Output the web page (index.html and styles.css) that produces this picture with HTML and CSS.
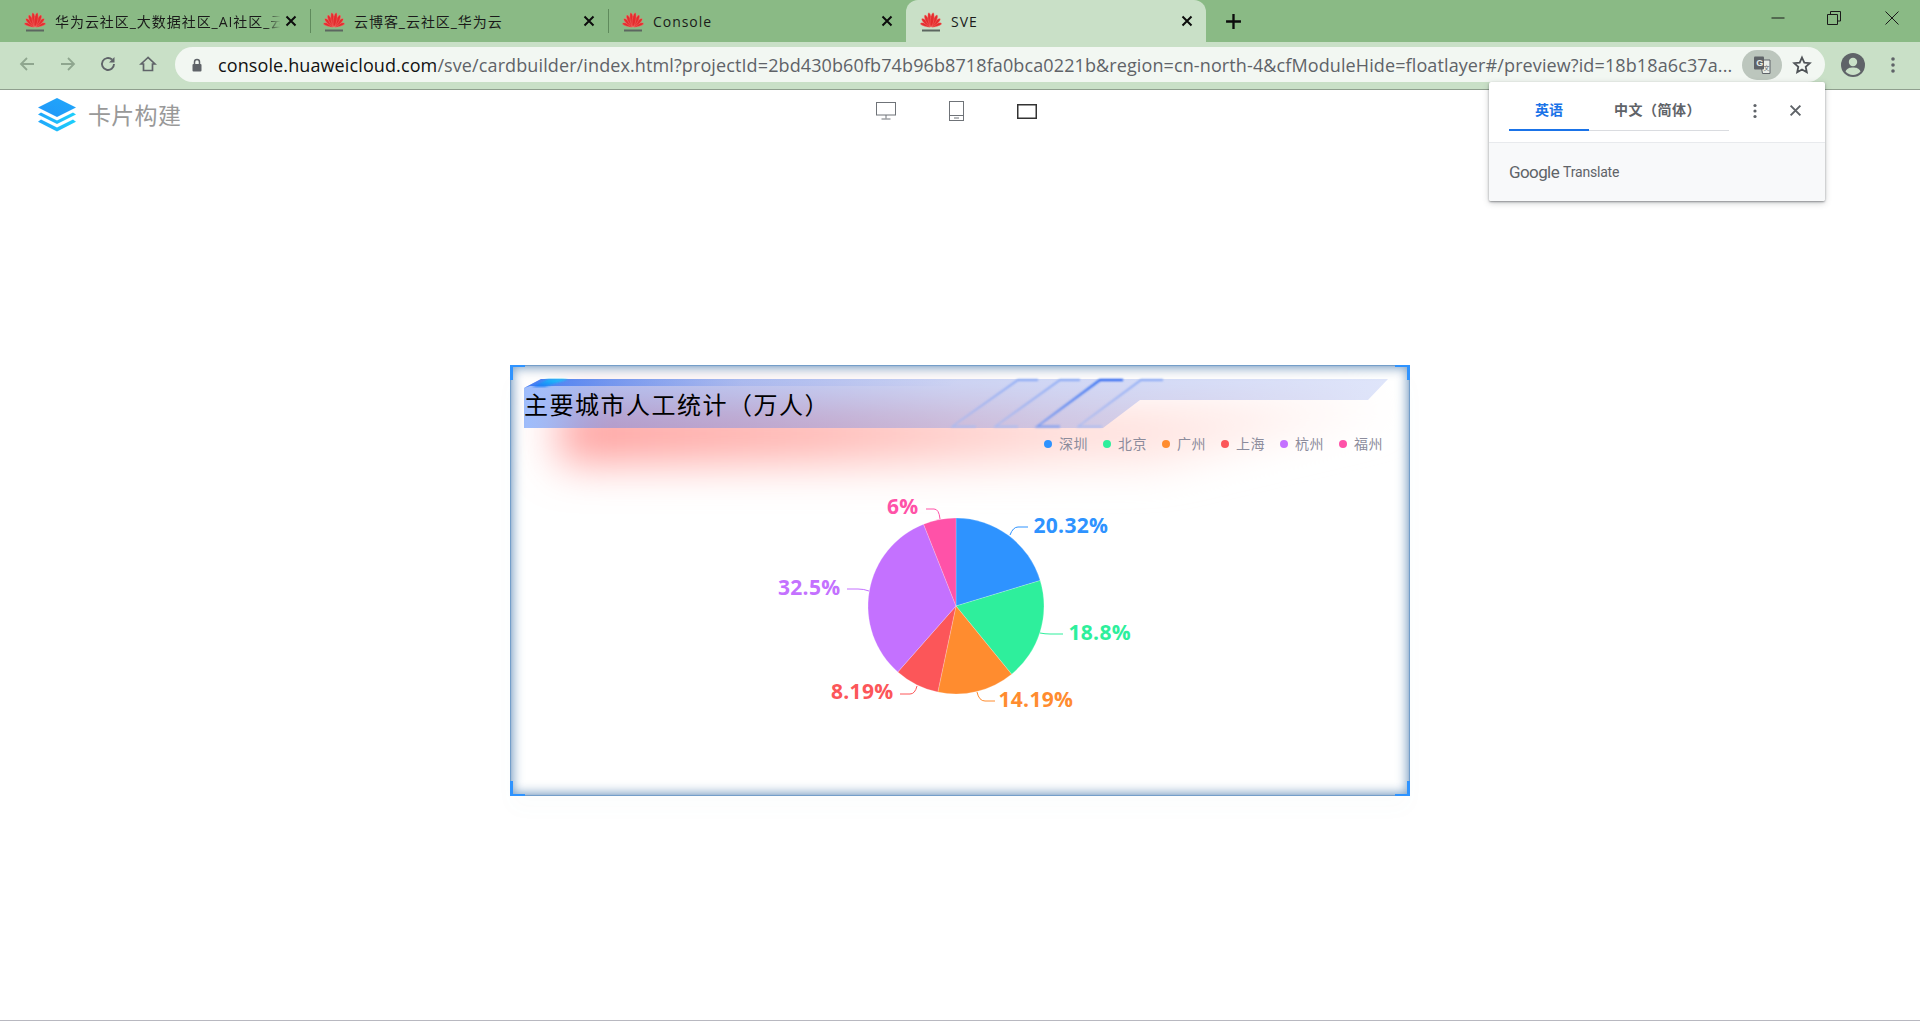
FILE: index.html
```html
<!DOCTYPE html>
<html lang="zh-CN">
<head>
<meta charset="utf-8">
<title>SVE</title>
<link rel="stylesheet" href="styles.css">
</head>
<body>
<svg class="defs" width="0" height="0" aria-hidden="true">
  <defs>
    <symbol id="huawei" viewBox="0 0 22 20">
      <g fill="#e42c2e" stroke="#f58a7e" stroke-width="0.350">
        <ellipse cx="11" cy="9" rx="1.500" ry="5.500" transform="rotate(-74 11 14.500)"/>
        <ellipse cx="11" cy="9" rx="1.500" ry="5.500" transform="rotate(74 11 14.500)"/>
        <ellipse cx="11" cy="8.500" rx="1.800" ry="6" transform="rotate(-50 11 14.500)"/>
        <ellipse cx="11" cy="8.500" rx="1.800" ry="6" transform="rotate(50 11 14.500)"/>
        <ellipse cx="11" cy="8" rx="1.900" ry="6.500" transform="rotate(-29 11 14.500)"/>
        <ellipse cx="11" cy="8" rx="1.900" ry="6.500" transform="rotate(29 11 14.500)"/>
        <ellipse cx="11" cy="7.500" rx="1.800" ry="7" transform="rotate(-9 11 14.500)"/>
        <ellipse cx="11" cy="7.500" rx="1.800" ry="7" transform="rotate(9 11 14.500)"/>
      </g>
      <rect x="2" y="17.500" width="18" height="2" fill="#5c6660"/>
    </symbol>
    <symbol id="tabx" viewBox="0 0 12 12">
      <path d="M1.500 1.500 10.500 10.500M10.500 1.500 1.500 10.500" fill="none" stroke="#0c0c0c" stroke-width="2"/>
    </symbol>
  </defs>
</svg>

<header class="browser">
  <div class="tabstrip">
    <div class="tab">
      <svg class="favicon"><use href="#huawei"/></svg>
      <span class="tab-title tab-title-fade">华为云社区_大数据社区_AI社区_云</span>
      <svg class="tab-close"><use href="#tabx"/></svg>
    </div>
    <div class="tab tab-second">
      <svg class="favicon"><use href="#huawei"/></svg>
      <span class="tab-title">云博客_云社区_华为云</span>
      <svg class="tab-close"><use href="#tabx"/></svg>
    </div>
    <div class="tab tab-last">
      <svg class="favicon"><use href="#huawei"/></svg>
      <span class="tab-title">Console</span>
      <svg class="tab-close"><use href="#tabx"/></svg>
    </div>
    <div class="tab tab-active">
      <svg class="favicon"><use href="#huawei"/></svg>
      <span class="tab-title">SVE</span>
      <svg class="tab-close"><use href="#tabx"/></svg>
    </div>
    <svg class="newtab" viewBox="0 0 16 16"><path d="M8 1V15M1 8H15" stroke="#0c0c0c" stroke-width="2.200"/></svg>
    <div class="winctl">
      <svg class="winbtn" viewBox="0 0 14 14"><path d="M0.500 7H13.500" stroke="#1a1a1a" fill="none"/></svg>
      <svg class="winbtn" viewBox="0 0 14 14"><path d="M3.500 3V0.500H13.500V10H11M0.500 3.500H10.500V13.500H0.500Z" stroke="#1a1a1a" fill="none"/></svg>
      <svg class="winbtn winbtn-close" viewBox="0 0 14 14"><path d="M0.500 0.500 13.500 13.500M13.500 0.500 0.500 13.500" stroke="#1a1a1a" fill="none"/></svg>
    </div>
  </div>
  <div class="toolbar">
    <svg class="navicon nav-back" viewBox="0 0 18 18"><path d="M16 9H3M9 3 3 9 9 15" fill="none" stroke="#8fa68f" stroke-width="1.800"/></svg>
    <svg class="navicon nav-fwd" viewBox="0 0 18 18"><path d="M2 9H15M9 3 15 9 9 15" fill="none" stroke="#8fa68f" stroke-width="1.800"/></svg>
    <svg class="navicon nav-reload" viewBox="0 0 18 18"><path d="M15 9A6 6 0 1 1 13 4.500" fill="none" stroke="#5f6368" stroke-width="1.900"/><path d="M15.500 2V7.500H10Z" fill="#5f6368"/></svg>
    <svg class="navicon nav-home" viewBox="0 0 18 18"><path d="M9 2.500 2 9H4.500V15.500H13.500V9H16Z" fill="none" stroke="#5f6368" stroke-width="1.700"/></svg>
    <div class="omnibox">
      <svg class="lock" viewBox="0 0 12 14"><path d="M3.500 6V4A2.500 2.500 0 0 1 8.500 4V6" fill="none" stroke="#5f6368" stroke-width="1.500"/><rect x="1.500" y="6" width="9" height="7.500" rx="1" fill="#5f6368"/></svg>
      <div class="url"><span class="url-host">console.huaweicloud.com</span>/sve/cardbuilder/index.html?projectId=2bd430b60fb74b96b8718fa0bca0221b&amp;region=cn-north-4&amp;cfModuleHide=floatlayer#/preview?id=18b18a6c37a...</div>
      <div class="translate-pill">
        <svg class="gt" viewBox="0 0 20 20"><path d="M8 5H18V18.500H10.500Z" fill="#e9eee9" stroke="#5f6368" stroke-width="1"/><rect x="2" y="1.500" width="10" height="13" rx="1" fill="#5f6368"/><text class="gt-g" x="4.200" y="11">G</text><text class="gt-x" x="11.500" y="15">文</text></svg>
      </div>
      <svg class="star" viewBox="0 0 20 20"><path d="M10 2.500 12.300 7.600 17.800 8.200 13.700 11.900 14.800 17.300 10 14.500 5.200 17.300 6.300 11.900 2.200 8.200 7.700 7.600Z" fill="none" stroke="#4f5357" stroke-width="1.800"/></svg>
    </div>
    <svg class="avatar" viewBox="0 0 24 24"><circle cx="12" cy="12" r="12" fill="#5f6368"/><circle cx="12" cy="9" r="4.200" fill="#c9e0c7"/><path d="M4.500 18.500C6 15 9 14.500 12 14.500S18 15 19.500 18.500A10 10 0 0 1 4.500 18.500Z" fill="#c9e0c7"/></svg>
    <svg class="menu" viewBox="0 0 4 18"><circle cx="2" cy="3" r="1.800"/><circle cx="2" cy="9" r="1.800"/><circle cx="2" cy="15" r="1.800"/></svg>
  </div>
</header>

<aside class="gt-popup">
  <div class="gt-top">
    <div class="gt-tabs">
      <span class="gt-tab gt-tab-on">英语</span>
      <span class="gt-tab">中文（简体）</span>
    </div>
    <svg class="gt-dots" viewBox="0 0 4 16"><circle cx="2" cy="2.500" r="1.600"/><circle cx="2" cy="8" r="1.600"/><circle cx="2" cy="13.500" r="1.600"/></svg>
    <svg class="gt-close" viewBox="0 0 12 12"><path d="M1.500 1.500 10.500 10.500M10.500 1.500 1.500 10.500" stroke="#5f6368" stroke-width="1.800" fill="none"/></svg>
  </div>
  <div class="gt-foot"><span class="gt-brand">Google</span> <span class="gt-name">Translate</span></div>
</aside>

<main class="page">
  <div class="topbar">
    <div class="brand">
      <svg class="brand-logo" viewBox="0 0 40 34">
        <defs>
          <linearGradient id="lg1" x1="0" y1="1" x2="1" y2="0"><stop offset="0" stop-color="#2196f8"/><stop offset="1" stop-color="#20a8fb"/></linearGradient>
          <linearGradient id="lg2" x1="0" y1="0" x2="1" y2="0"><stop offset="0" stop-color="#20a6fb"/><stop offset="1" stop-color="#1dd0fb"/></linearGradient>
        </defs>
        <path d="M20 0 39 9.500 20 19 1 9.500Z" fill="url(#lg1)"/>
        <path d="M4 14.500 20 22.500 36 14.500 39 16.500 20 26 1 16.500Z" fill="url(#lg2)"/>
        <path d="M4 21.500 20 29.500 36 21.500 39 23.800 20 33.500 1 23.800Z" fill="url(#lg2)"/>
      </svg>
      <span class="brand-name">卡片构建</span>
    </div>
    <div class="devices">
      <svg class="dev-desktop" viewBox="0 0 20 18"><rect x="0.500" y="0.500" width="19" height="12.500" fill="none" stroke="#6f7378"/><path d="M10 13V16.500M5.500 17H14.500" stroke="#6f7378" fill="none"/></svg>
      <svg class="dev-tablet" viewBox="0 0 15 20"><rect x="0.500" y="0.500" width="14" height="19" fill="none" stroke="#6f7378"/><path d="M0.500 14.500H14.500" stroke="#6f7378"/><path d="M5 17H10" stroke="#6f7378"/></svg>
      <svg class="dev-wide" viewBox="0 0 20 15"><rect x="0.750" y="0.750" width="18.500" height="13.500" fill="none" stroke="#333" stroke-width="1.500"/></svg>
    </div>
    <div class="topbar-end"></div>
  </div>

  <section class="card">
    <svg class="card-decor" viewBox="510 365 900 431" aria-hidden="true">
      <defs>
        <filter id="glowblur" x="-20%" y="-200%" width="140%" height="500%"><feGaussianBlur stdDeviation="22"/></filter>
        <filter id="softblur" x="-10%" y="-10%" width="120%" height="120%"><feGaussianBlur stdDeviation="0.800"/></filter>
        <linearGradient id="glowfill" x1="0" y1="0" x2="1" y2="0">
          <stop offset="0" stop-color="#ff9a98"/>
          <stop offset="0.300" stop-color="#ffb4b0"/>
          <stop offset="0.600" stop-color="#ffdcd8"/>
          <stop offset="1" stop-color="#fff4f2"/>
        </linearGradient>
        <linearGradient id="bandfill" x1="0" y1="0" x2="1" y2="0">
          <stop offset="0" stop-color="#7fa8fb" stop-opacity="0.750"/>
          <stop offset="0.100" stop-color="#6a8ae8" stop-opacity="0.500"/>
          <stop offset="0.500" stop-color="#6f8eea" stop-opacity="0.350"/>
          <stop offset="1" stop-color="#5f7fe8" stop-opacity="0.200"/>
        </linearGradient>
        <linearGradient id="bandtop" x1="0" y1="0" x2="1" y2="0">
          <stop offset="0" stop-color="#2f6cf0" stop-opacity="0.800"/>
          <stop offset="0.500" stop-color="#5f8af0" stop-opacity="0.200"/>
          <stop offset="1" stop-color="#5f8af0" stop-opacity="0"/>
        </linearGradient>
        <linearGradient id="tip" x1="0" y1="1" x2="1" y2="0">
          <stop offset="0" stop-color="#1f6cf5"/>
          <stop offset="1" stop-color="#19d6fb"/>
        </linearGradient>
        <linearGradient id="linesoft" x1="0" y1="0" x2="0" y2="1">
          <stop offset="0" stop-color="#6f97f6"/>
          <stop offset="1" stop-color="#a6bbf4"/>
        </linearGradient>
        <linearGradient id="linestrong" x1="0" y1="0" x2="0" y2="1">
          <stop offset="0" stop-color="#1257f2"/>
          <stop offset="1" stop-color="#7f9ff2"/>
        </linearGradient>
      </defs>
      <path d="M560 405H1400L1160 462H560Z" fill="url(#glowfill)" filter="url(#glowblur)"/>
      <path d="M524 388 541 379H1388L1368 400H1140L1103 428H524Z" fill="url(#bandfill)"/>
      <path d="M524 388 541 379H960L950 386H530Z" fill="url(#bandtop)"/>
      <path d="M532 387 548 379H568L545 387Z" fill="url(#tip)" filter="url(#softblur)"/>
      <g fill="none" stroke-width="1.300" filter="url(#softblur)">
        <path d="M976 426.500H952L1018 380H1038" stroke="url(#linesoft)"/>
        <path d="M1018 426.500H995L1060 380H1080" stroke="url(#linesoft)"/>
        <path d="M1060 426.500H1037L1100 380H1123" stroke="url(#linestrong)" stroke-width="1.800"/>
        <path d="M1102 426.500H1078L1141 380H1163" stroke="url(#linesoft)"/>
      </g>
    </svg>
    <span class="corner corner-tl"></span>
    <span class="corner corner-tr"></span>
    <span class="corner corner-bl"></span>
    <span class="corner corner-br"></span>
    <h1 class="card-title">主要城市人工统计（万人）</h1>
    <ul class="legend">
      <li class="legend-item"><i class="dot c-blue"></i>深圳</li>
      <li class="legend-item"><i class="dot c-green"></i>北京</li>
      <li class="legend-item"><i class="dot c-orange"></i>广州</li>
      <li class="legend-item"><i class="dot c-red"></i>上海</li>
      <li class="legend-item"><i class="dot c-purple"></i>杭州</li>
      <li class="legend-item"><i class="dot c-pink"></i>福州</li>
    </ul>
    <svg class="pie" viewBox="510 460 900 336">
      <g class="slices">
        <path class="s-blue" d="M956 606V518A88 88 0 0 1 1040.200 580.500Z"/>
        <path class="s-green" d="M956 606 1040.200 580.500A88 88 0 0 1 1011.600 674.200Z"/>
        <path class="s-orange" d="M956 606 1011.600 674.200A88 88 0 0 1 937.800 692.100Z"/>
        <path class="s-red" d="M956 606 937.800 692.100A88 88 0 0 1 897.800 672Z"/>
        <path class="s-purple" d="M956 606 897.800 672A88 88 0 0 1 923.600 524.200Z"/>
        <path class="s-pink" d="M956 606 923.600 524.200A88 88 0 0 1 956 518Z"/>
      </g>
      <g class="leaders">
        <path class="l-blue" d="M1010 535Q1013 527 1018 527H1028"/>
        <path class="l-green" d="M1040 633Q1045 634 1050 634H1063"/>
        <path class="l-orange" d="M977 692Q979 701 985 701H995"/>
        <path class="l-red" d="M917 686Q915 694 910 694H900"/>
        <path class="l-purple" d="M869 591Q864 589 858 589H847"/>
        <path class="l-pink" d="M940 519Q939 509 934 509H926"/>
      </g>
      <g class="pie-labels">
        <text class="t-blue" x="1033.500" y="532.500">20.32%</text>
        <text class="t-green" x="1068.500" y="639.500">18.8%</text>
        <text class="t-orange" x="998.500" y="707">14.19%</text>
        <text class="t-red" x="831" y="699">8.19%</text>
        <text class="t-purple" x="778" y="594.500">32.5%</text>
        <text class="t-pink" x="887" y="514">6%</text>
      </g>
    </svg>
  </section>
</main>
<div class="page-rule"></div>
</body>
</html>
```

FILE: styles.css
```css
* { box-sizing: border-box; }
html, body { margin: 0; padding: 0; height: 100%; background: #fff; overflow: hidden; }
body {
  display: flex;
  flex-direction: column;
  height: 1021px;
  position: relative;
  font-family: "Open Sans", "Noto Sans CJK SC", sans-serif;
}
.defs { position: absolute; }

/* tab strip */
.browser { flex: none; }
.tabstrip {
  height: 42px;
  background: #8aba85;
  display: flex;
  align-items: stretch;
  padding-left: 12px;
}
.tab {
  width: 298px;
  display: flex;
  align-items: center;
  padding: 0 13px 0 12px;
  position: relative;
}
.tab-second { padding-left: 13px; }
.tab-last { padding-left: 14px; }
.tab::after {
  content: "";
  position: absolute;
  right: -1px;
  top: 9px;
  height: 24px;
  width: 1px;
  background: #5f8a5c;
}
.tab-last::after, .tab-active::after { display: none; }
.tab-active {
  width: 300px;
  padding-left: 14px;
  background: #c9e0c7;
  border-radius: 12px 12px 0 0;
}
.favicon { width: 22px; height: 20px; flex: none; margin-top: 1px; }
.tab-title {
  flex: 1;
  margin-left: 9px;
  font-size: 14px;
  color: #1a1a1a;
  white-space: nowrap;
  overflow: hidden;
  letter-spacing: 0.95px;
  min-width: 0;
}
.tab-title-fade {
  -webkit-mask-image: linear-gradient(to right, #000 92%, transparent 98%);
  mask-image: linear-gradient(to right, #000 92%, transparent 98%);
}
.tab-close { width: 12px; height: 12px; flex: none; }
.newtab { width: 17px; height: 17px; align-self: center; margin-left: 19px; }
.winctl { margin-left: auto; display: flex; align-items: center; gap: 42px; padding: 0 21px 7px 0; }
.winbtn { width: 14px; height: 14px; }
.winbtn-close { margin-left: 2px; }

/* toolbar */
.toolbar {
  height: 48px;
  background: #c9e0c7;
  border-bottom: 1px solid #8f9f8e;
  display: flex;
  align-items: flex-start;
  padding: 5px 0 0 18px;
}
.navicon { width: 18px; height: 18px; margin: 8px 0 0 0; flex: none; }
.nav-back { margin-right: 23px; }
.nav-fwd { margin-right: 22px; }
.nav-reload { margin-right: 22px; }
.nav-home { margin-right: 18px; }
.omnibox {
  width: 1650px;
  height: 35px;
  background: #f2f7f2;
  border-radius: 18px;
  display: flex;
  align-items: center;
  padding-left: 16px;
  flex: none;
}
.lock { width: 12px; height: 14px; flex: none; }
.url {
  margin-left: 15px;
  width: 1521px;
  flex: none;
  white-space: nowrap;
  overflow: hidden;
  font-size: 18px;
  color: #5f6368;
  letter-spacing: 0.11px;
}
.url-host { color: #111; }
.translate-pill {
  width: 40px;
  height: 30px;
  border-radius: 15px;
  background: #bcc6bd;
  margin-left: 3px;
  display: flex;
  align-items: center;
  justify-content: center;
  flex: none;
}
.gt { width: 20px; height: 20px; }
.gt-g { font: 700 9px "Liberation Sans", sans-serif; fill: #e9eee9; }
.gt-x { font: 6px "Noto Sans CJK SC", sans-serif; fill: #5f6368; }
.star { width: 20px; height: 20px; margin-left: 10px; flex: none; }
.avatar { width: 24px; height: 24px; margin: 6px 0 0 16px; flex: none; }
.menu { width: 4px; height: 18px; margin: 9px 0 0 26px; fill: #5f6368; flex: none; }

/* translate popup */
.gt-popup {
  position: absolute;
  left: 1489px;
  top: 82px;
  width: 336px;
  height: 119px;
  background: #fff;
  border-radius: 2px;
  box-shadow: 0 1px 2px rgba(60,64,67,.5), 0 2px 6px rgba(60,64,67,.25);
  z-index: 5;
  display: flex;
  flex-direction: column;
}
.gt-top {
  height: 61px;
  border-bottom: 1px solid #e8eaed;
  display: flex;
  align-items: flex-start;
  padding-left: 20px;
  flex: none;
}
.gt-tabs { display: flex; width: 220px; height: 49px; border-bottom: 1px solid #dadce0; }
.gt-tab {
  font-size: 14px;
  font-weight: 700;
  color: #5f6368;
  line-height: 20px;
  padding: 18px 25px 0;
  white-space: nowrap;
  letter-spacing: 0.5px;
}
.gt-tab-on {
  width: 80px;
  height: 49px;
  color: #1a73e8;
  border-bottom: 2px solid #1a73e8;
  padding: 18px 0 0;
  text-align: center;
  letter-spacing: 0;
}
.gt-dots { width: 4px; height: 16px; margin: 21px 0 0 24px; fill: #5f6368; }
.gt-close { width: 13px; height: 13px; margin: 22px 0 0 32px; }
.gt-foot {
  flex: 1;
  background: #f8f9fa;
  padding: 0 20px;
  display: flex;
  align-items: center;
  gap: 4px;
  color: #5f6368;
  border-radius: 0 0 2px 2px;
}
.gt-brand { font: 17px "Roboto", sans-serif; letter-spacing: -0.6px; }
.gt-name { font: 14px "Roboto", sans-serif; letter-spacing: -0.2px; }

/* page */
.page { flex: 1; min-height: 0; }
.topbar {
  height: 44px;
  display: grid;
  grid-template-columns: 1fr auto 1fr;
  align-items: start;
  padding-right: 8px;
}
.brand { display: flex; align-items: center; padding: 8px 0 0 37px; }
.brand-logo { width: 40px; height: 34px; flex: none; }
.brand-name { font-size: 23px; line-height: 34px; color: #999; margin-left: 11px; letter-spacing: 0.3px; }
.devices { display: flex; align-items: center; gap: 53px; padding-top: 11px; }
.dev-desktop { width: 20px; height: 18px; }
.dev-tablet { width: 15px; height: 20px; }
.dev-wide { width: 20px; height: 15px; }

/* card */
.card {
  position: relative;
  width: 900px;
  height: 431px;
  margin: 231px auto 0;
  background: #fff;
  padding: 26px 14px 0;
  display: flex;
  flex-direction: column;
  box-shadow: 0 14px 20px rgba(120,140,170,.02);
}
.card::after {
  content: "";
  position: absolute;
  inset: 0;
  pointer-events: none;
  box-shadow:
    inset 0 0 1px 1px #6f9bc8,
    inset 0 0 11px 3px rgba(70,120,170,.72);
}
.card-decor {
  position: absolute;
  left: 0; top: 0;
  width: 900px; height: 431px;
}
.corner { position: absolute; width: 15px; height: 15px; border: 0 solid #2e93ff; z-index: 1; }
.corner-tl { left: 0; top: 0; border-width: 2px 0 0 3px; }
.corner-tr { right: 0; top: 0; border-width: 2px 3px 0 0; }
.corner-bl { left: 0; bottom: 0; border-width: 0 0 2px 3px; }
.corner-br { right: 0; bottom: 0; border-width: 0 3px 2px 0; }
.card-title {
  position: relative;
  margin: 0;
  font-size: 24px;
  font-weight: 400;
  line-height: 28px;
  color: #000;
  letter-spacing: 1.5px;
}
.legend {
  position: relative;
  list-style: none;
  margin: 16px 13px 0 0;
  padding: 0;
  display: flex;
  justify-content: flex-end;
  gap: 15px;
  height: 18px;
}
.legend-item {
  display: flex;
  align-items: center;
  font-size: 14px;
  line-height: 18px;
  color: #8c8c9c;
  white-space: nowrap;
  letter-spacing: 0.5px;
}
.dot { width: 8px; height: 8px; border-radius: 50%; margin-right: 7px; }
.c-blue { background: #2e93ff; }
.c-green { background: #2eef9c; }
.c-orange { background: #ff8c2f; }
.c-red { background: #fc5659; }
.c-purple { background: #c471ff; }
.c-pink { background: #ff52a8; }
.pie {
  position: relative;
  display: block;
  width: 900px;
  height: 336px;
  margin: 7px 0 0 -14px;
  flex: none;
  overflow: visible;
}
.slices path { stroke: #fff; stroke-opacity: .35; stroke-width: .6; }
.s-blue { fill: #2e93ff; }
.s-green { fill: #2eef9c; }
.s-orange { fill: #ff8c2f; }
.s-red { fill: #fc5659; }
.s-purple { fill: #c471ff; }
.s-pink { fill: #ff52a8; }
.leaders path { fill: none; stroke-width: 1; }
.l-blue { stroke: #2e93ff; }
.l-green { stroke: #2eef9c; }
.l-orange { stroke: #ff8c2f; }
.l-red { stroke: #fc5659; }
.l-purple { stroke: #c471ff; }
.l-pink { stroke: #ff52a8; }
.pie-labels text { font: 700 21px "Open Sans", sans-serif; letter-spacing: 0.3px; }
.t-blue { fill: #2e93ff; }
.t-green { fill: #2eef9c; }
.t-orange { fill: #ff8c2f; }
.t-red { fill: #fc5659; }
.t-purple { fill: #c471ff; }
.t-pink { fill: #ff52a8; }

.page-rule { height: 1px; background: #b8b8c0; flex: none; }
```
